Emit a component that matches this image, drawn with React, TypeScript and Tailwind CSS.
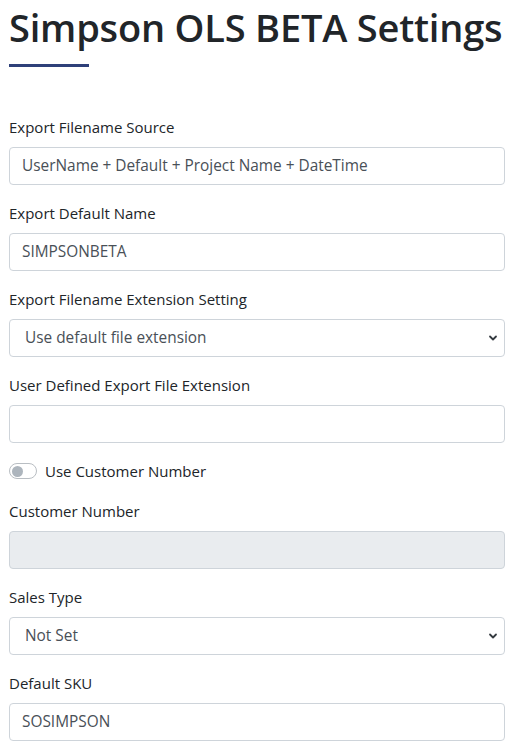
import React from "react";

const font = { fontFamily: '"Open Sans", "Noto Sans", sans-serif' };

function Label({ children }: { children: React.ReactNode }) {
  return <div className="h-[24px] mb-[8px] text-[15px] leading-[24px] text-[#212529]">{children}</div>;
}

function TextInput({ value, disabled }: { value?: string; disabled?: boolean }) {
  return (
    <div
      className={`h-[38px] w-full rounded-[4px] border border-[#ced4da] px-[12px] flex items-center text-[15.4px] text-[#495057] ${disabled ? "bg-[#e9ecef]" : "bg-white"}`}
    >
      {value}
    </div>
  );
}

function Select({ value }: { value: string }) {
  return (
    <div className="h-[38px] w-full rounded-[4px] border border-[#ced4da] pl-[15px] pr-[6px] flex items-center justify-between text-[15.4px] text-[#495057] bg-white">
      <span>{value}</span>
      <svg width="10" height="8" viewBox="0 0 10 8">
        <path d="M2 2.5 L5 5.5 L8 2.5" fill="none" stroke="#343a40" strokeWidth="1.8" strokeLinecap="round" strokeLinejoin="round" />
      </svg>
    </div>
  );
}

function Field({ label, children }: { label: string; children: React.ReactNode }) {
  return (
    <div className="mb-[16px]">
      <Label>{label}</Label>
      {children}
    </div>
  );
}

export default function App() {
  return (
    <div className="bg-white min-h-[748px] pl-[9px] pt-[2px]" style={font}>
      <div className="w-[496px]">
        <h1 className="text-[38px] leading-[50px] font-semibold text-[#212529] tracking-[-0.2px]">Simpson OLS BETA Settings</h1>
        <div className="mt-[12px] h-[3px] w-[80px] bg-[#2e4079]" />
        <div className="h-[48px]" />
        <Field label="Export Filename Source">
          <TextInput value="UserName + Default + Project Name + DateTime" />
        </Field>
        <Field label="Export Default Name">
          <TextInput value="SIMPSONBETA" />
        </Field>
        <Field label="Export Filename Extension Setting">
          <Select value="Use default file extension" />
        </Field>
        <Field label="User Defined Export File Extension">
          <TextInput />
        </Field>
        <div className="mb-[16px] h-[24px] flex items-center gap-[8px]">
          <div className="w-[28px] h-[16px] rounded-full border border-[#b9bec3] flex items-center pl-[2px]">
            <div className="w-[11px] h-[11px] rounded-full bg-[#adb5bd]" />
          </div>
          <span className="text-[15px] text-[#212529]">Use Customer Number</span>
        </div>
        <Field label="Customer Number">
          <TextInput disabled />
        </Field>
        <Field label="Sales Type">
          <Select value="Not Set" />
        </Field>
        <Field label="Default SKU">
          <TextInput value="SOSIMPSON" />
        </Field>
      </div>
    </div>
  );
}
